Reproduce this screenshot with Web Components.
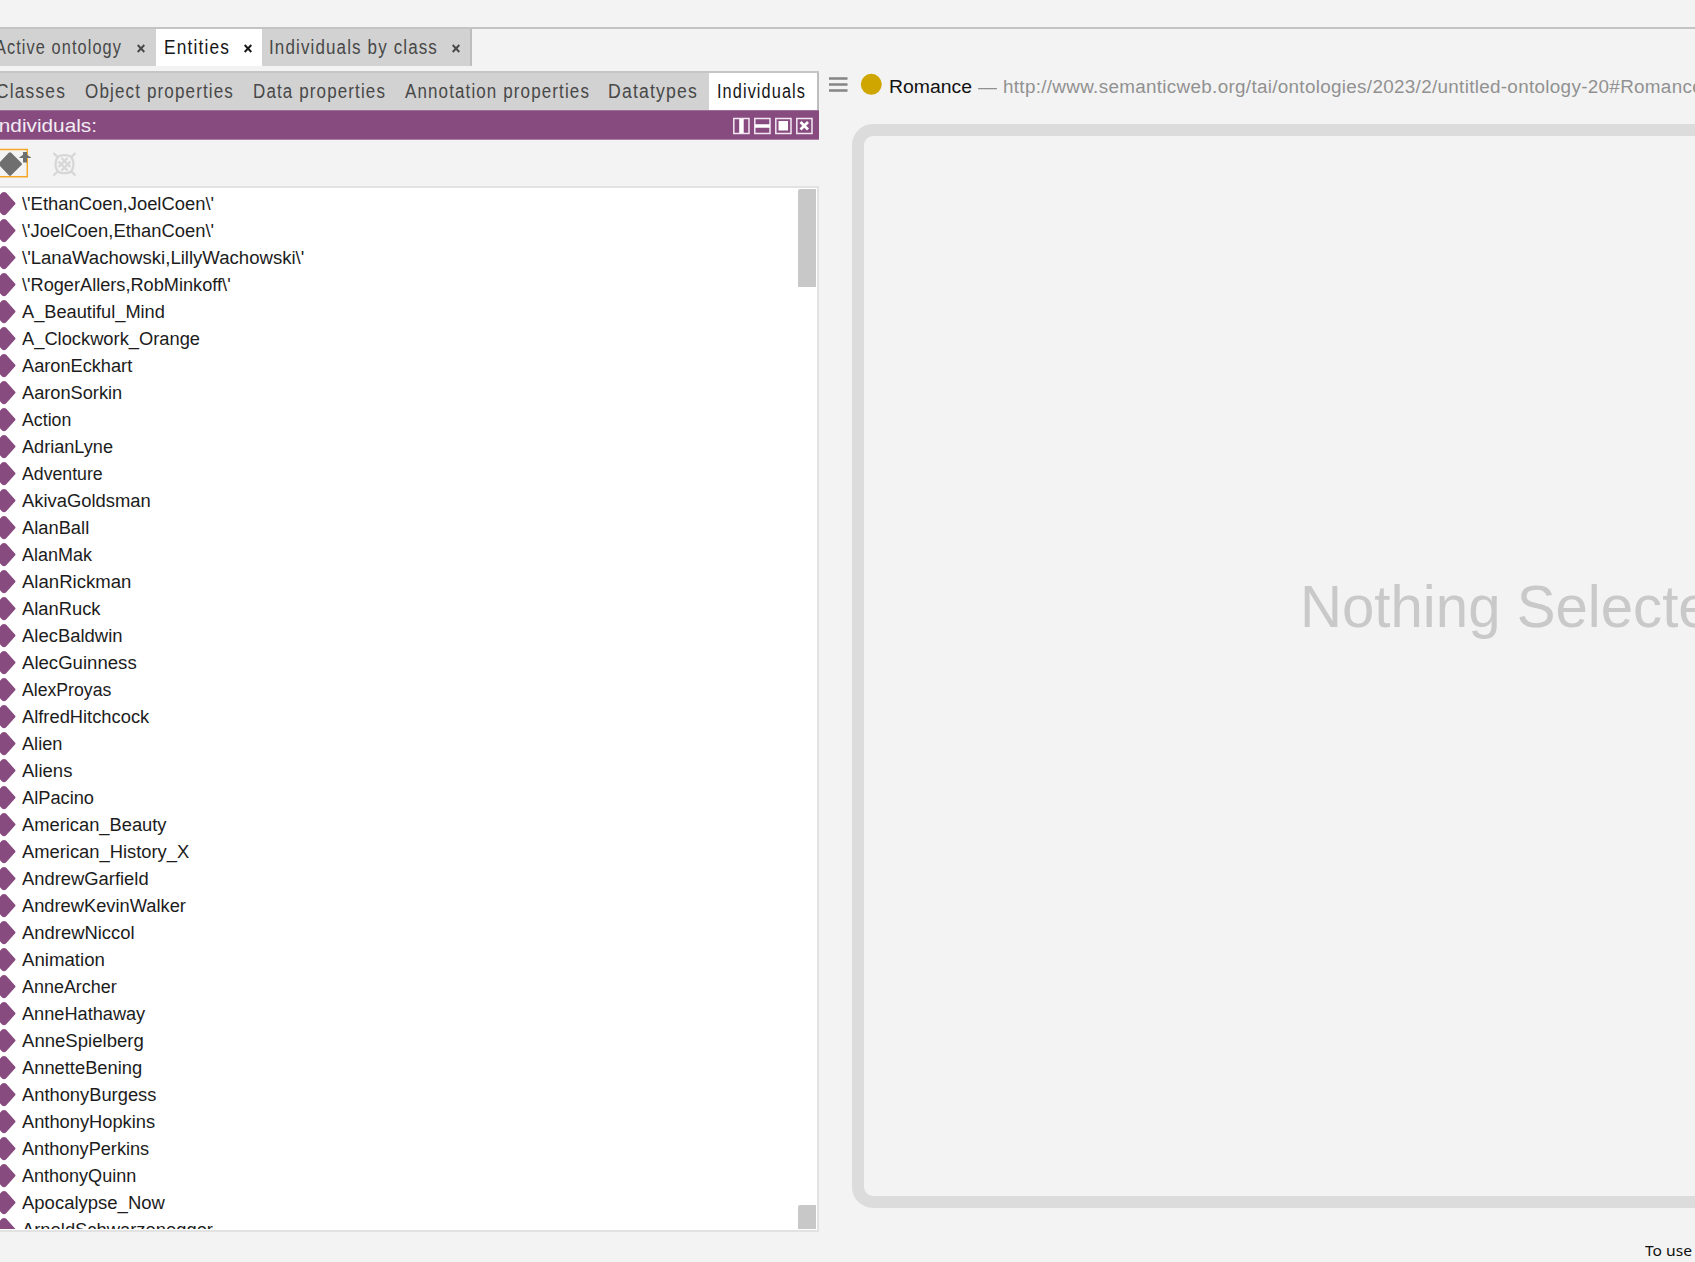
<!DOCTYPE html>
<html lang="en"><head><meta charset="utf-8"><title>Ontology editor</title>
<style>
html,body{margin:0;height:100%;overflow:hidden;background:#f3f3f3;font-family:"Liberation Sans",Arial,sans-serif}
</style></head><body>
<ontology-editor></ontology-editor>
<script>
const define=(name,html,setup)=>customElements.define(name,class extends HTMLElement{
  constructor(){super();this.attachShadow({mode:'open'})}
  connectedCallback(){this.shadowRoot.innerHTML=typeof html==='function'?html(this):html;if(setup)setup(this)}
});
/* Single-line label set to a fixed advance width: optional tracking, then horizontal scale. */
define('fit-label',`<style>:host{display:block;white-space:pre;flex:none}span{display:inline-block;transform-origin:0 50%;white-space:pre}</style><span></span>`,el=>{
  const s=el.shadowRoot.querySelector('span'),w=+el.getAttribute('w');
  s.textContent=el.getAttribute('text');
  s.style.letterSpacing=(el.getAttribute('track')||0)+'px';
  const n=s.getBoundingClientRect().width;
  el.style.width=w+'px';
  if(n)s.style.transform=`scaleX(${w/n})`;
});
define('view-tab',el=>`<style>
:host{display:flex;box-sizing:border-box;flex:none;width:${el.getAttribute('width')}px;height:100%;background:#d2d2d2;color:#484848;font-size:19.5px;line-height:36px}
:host([active]){background:#fff;color:#161616}
:host([edge]){border-right:2px solid #bdbdbd}
fit-label{margin-left:${el.getAttribute('pad')}px}
svg{flex:none;width:8px;height:9px;margin:15px 0 0 ${el.getAttribute('gap')||0}px}
path{stroke:currentColor;stroke-width:1.900;fill:none}</style>
<fit-label track="1.3" text="${el.getAttribute('text')}" w="${el.getAttribute('w')}"></fit-label>
${el.hasAttribute('gap')?'<svg viewBox="0 0 8 9"><path d="M.7 1 7.300 8M7.300 1 .7 8"/></svg>':''}`);
define('panel-title',`<style>
:host{display:flex;align-items:center;height:30px;background:#874b80;color:#f3ecf3;font-size:19px;line-height:30px;box-sizing:border-box;border-top:1px solid #a06c9a;border-bottom:1px solid #a981a4}
fit-label{margin:1px 0 0 -7px}.fill{flex:1}svg{width:80px;height:18px;margin:1px 5.500px 0 0;flex:none}</style>
<fit-label text="Individuals:" w="104"></fit-label><span class="fill"></span>
<svg viewBox="0 0 80 18"><g fill="none" stroke="#f3e8f2" stroke-width="1.5"><path d="M.8 1.500H16V16.500H.8zM21.800 1.500H37V16.500H21.800zM42.800 1.500H58V16.500H42.800zM63.800 1.500H79V16.500H63.800z"/></g><path fill="#fff" d="M6.200 2h4.500v14H6.200zM22 7.200h15v3.600H22zM45.500 4h9.500v9.500H45.500z"/><path d="M67.500 5l7.500 7.500M75 5 67.500 12.500" stroke="#fff" stroke-width="2.800"/></svg>`);
define('tool-bar',`<style>:host{display:block;height:46px}svg{display:block;width:90px;height:46px}</style>
<svg viewBox="0 0 90 46"><path fill="none" stroke="#f5a728" stroke-width="1.500" d="M0 9.500H27.300V36.700H0"/><path fill="#6f6f6f" d="M-2 24 8.800 12.800Q10 11.800 11.200 12.800L21.500 23Q22.500 24 21.500 25L11.200 35.200Q10 36.200 8.800 35.200ZM19.300 17.500 23 14.800V12H27V14.800L31 17.500V18H27V22.500H23V18H19.300Z"/>
<g stroke="#d7d7d7" fill="none"><path stroke-width="2.300" d="M64.500 15.200Q70 15.200 71.800 18Q73.500 20.500 73.500 24.200Q73.500 28 71.800 30.500Q70 33.200 64.500 33.200Q59 33.200 57.200 30.500Q55.500 28 55.500 24.200Q55.500 20.500 57.200 18Q59 15.200 64.500 15.200Z"/><path stroke-width="2.300" d="M53.500 13 57.500 17M75.500 13 71.500 17M53.500 35.500 57.500 31.500M75.500 35.500 71.500 31.500M58.500 21.500 67.500 30.500M61.500 18 70.500 27M58.500 27 67.500 18M61.500 30.500 70.500 21.500"/></g></svg>`);
define('individual-row',el=>`<style>:host{display:flex;height:27px;flex:none;color:#1c1c1c;font-size:18px;line-height:27px}svg{width:22px;height:27px;flex:none}</style>
<svg viewBox="0 0 22 27"><path fill="#874b80" d="M2 1.500Q4 .5 6 1.500L15 11.500Q16 12.500 15 13.500L6 23.500Q4 25 2 23.500L-8 12.500Z"/></svg>
<fit-label text="${el.getAttribute('name')}" w="${el.getAttribute('w')}"></fit-label>`);
const individuals=[["\\'EthanCoen,JoelCoen\\'",198],["\\'JoelCoen,EthanCoen\\'",198],["\\'LanaWachowski,LillyWachowski\\'",281.5],["\\'RogerAllers,RobMinkoff\\'",213.3],["A_Beautiful_Mind",152.500],["A_Clockwork_Orange",185],["AaronEckhart",122.300],["AaronSorkin",113],["Action",66],["AdrianLyne",104.500],["Adventure",95],["AkivaGoldsman",139.500],["AlanBall",82.500],["AlanMak",85],["AlanRickman",121.500],["AlanRuck",93],["AlecBaldwin",113.300],["AlecGuinness",126.500],["AlexProyas",103],["AlfredHitchcock",138],["Alien",57.700],["Aliens",67],["AlPacino",87],["American_Beauty",154],["American_History_X",175],["AndrewGarfield",137.500],["AndrewKevinWalker",172],["AndrewNiccol",124.500],["Animation",97],["AnneArcher",108],["AnneHathaway",134.300],["AnneSpielberg",133],["AnnetteBening",131.500],["AnthonyBurgess",144.700],["AnthonyHopkins",143.500],["AnthonyPerkins",138],["AnthonyQuinn",126],["Apocalypse_Now",152.500],["ArnoldSchwarzenegger",197]];
define('individual-list',`<style>:host{display:flex;box-sizing:border-box;height:1046px;background:#fff;border:2px solid #e2e2e2;border-left:0;padding-bottom:1px}
.rows{flex:1;display:flex;flex-direction:column;overflow:hidden;padding-top:3px}
.track{width:18px;margin-right:1px;display:flex;flex-direction:column;justify-content:space-between;padding:1px 0 0}
i{display:block;background:#c8c8c8;height:98px;border-radius:2px 0 0 0}i+i{height:24px}</style>
<div class="rows">${individuals.map(([n,r])=>`<individual-row name="${n}" w="${(r*1.081-22).toFixed(1)}"></individual-row>`).join('')}</div><div class="track"><i></i><i></i></div>`);
define('entity-header',`<style>:host{display:flex;height:55px;padding-left:10px;font-size:18px;line-height:30px;color:#919191}
svg{width:60px;height:54px;flex:none}fit-label{margin-top:3px}.name{color:#111}</style>
<svg viewBox="0 0 60 54"><path d="M0 9.500H18.500M0 15.500H18.500M0 21.500H18.500" stroke="#858585" stroke-width="2.700"/><circle cx="42.300" cy="15.300" r="10.500" fill="#cfa500"/></svg>
<fit-label class="name" text="Romance" w="83"></fit-label><fit-label style="margin-left:6px" text="—" w="19"></fit-label>
<fit-label style="margin-left:6px" track="0.3" text="http://www.semanticweb.org/tai/ontologies/2023/2/untitled-ontology-20#Romance" w="700"></fit-label>`);
define('empty-view',`<style>:host{display:flex;box-sizing:border-box;width:1200px;height:1084px;margin-left:33px;border:12px solid #dcdcdc;border-radius:21px;color:#c9c9c9;font-size:60px;line-height:70px;padding:436px 0 0 435.500px}</style>
<fit-label text="Nothing Selected" w="443"></fit-label>`);
define('ontology-editor',`<style>:host{display:flex;flex-direction:column;width:1695px;height:1262px;overflow:hidden}
.top{height:27px;flex:none}.tabs{display:flex;height:37px;border-top:2px solid #c4c4c4;flex:none}
.body{display:flex;height:1196px}.left{width:818.500px;flex:none;padding-top:5px;box-sizing:border-box;margin-right:.5px}
.sub{display:flex;height:37px;border-top:2px solid #c6c6c6;background:#d2d2d2}
.right{flex:1;min-width:0;overflow:hidden;padding-top:3px}
.foot{font:15px/20px "Noto Sans","Open Sans",sans-serif;color:#111;display:flex;padding:32px 0 0 826px}</style>
<div class="top"></div>
<div class="tabs"><view-tab width="155.500" pad="-5" text="Active ontology" w="127" gap="15"></view-tab><view-tab active width="106.500" pad="8" text="Entities" w="66" gap="14"></view-tab><view-tab edge width="210" pad="7" text="Individuals by class" w="169" gap="14"></view-tab></div>
<div class="body"><div class="left">
<div class="sub"><view-tab width="75" pad="-4" text="Classes" w="70"></view-tab><view-tab width="168" pad="10" text="Object properties" w="149"></view-tab><view-tab width="152" pad="10" text="Data properties" w="133"></view-tab><view-tab width="203" pad="9.500" text="Annotation properties" w="185"></view-tab><view-tab width="111" pad="10" text="Datatypes" w="90"></view-tab><view-tab active edge width="109.500" pad="7.500" text="Individuals" w="89"></view-tab></div>
<panel-title></panel-title><tool-bar></tool-bar><individual-list></individual-list></div>
<div class="right"><entity-header></entity-header><empty-view></empty-view><div class="foot"><fit-label text="To use" w="47"></fit-label></div></div></div>`);
</script>
</body></html>
